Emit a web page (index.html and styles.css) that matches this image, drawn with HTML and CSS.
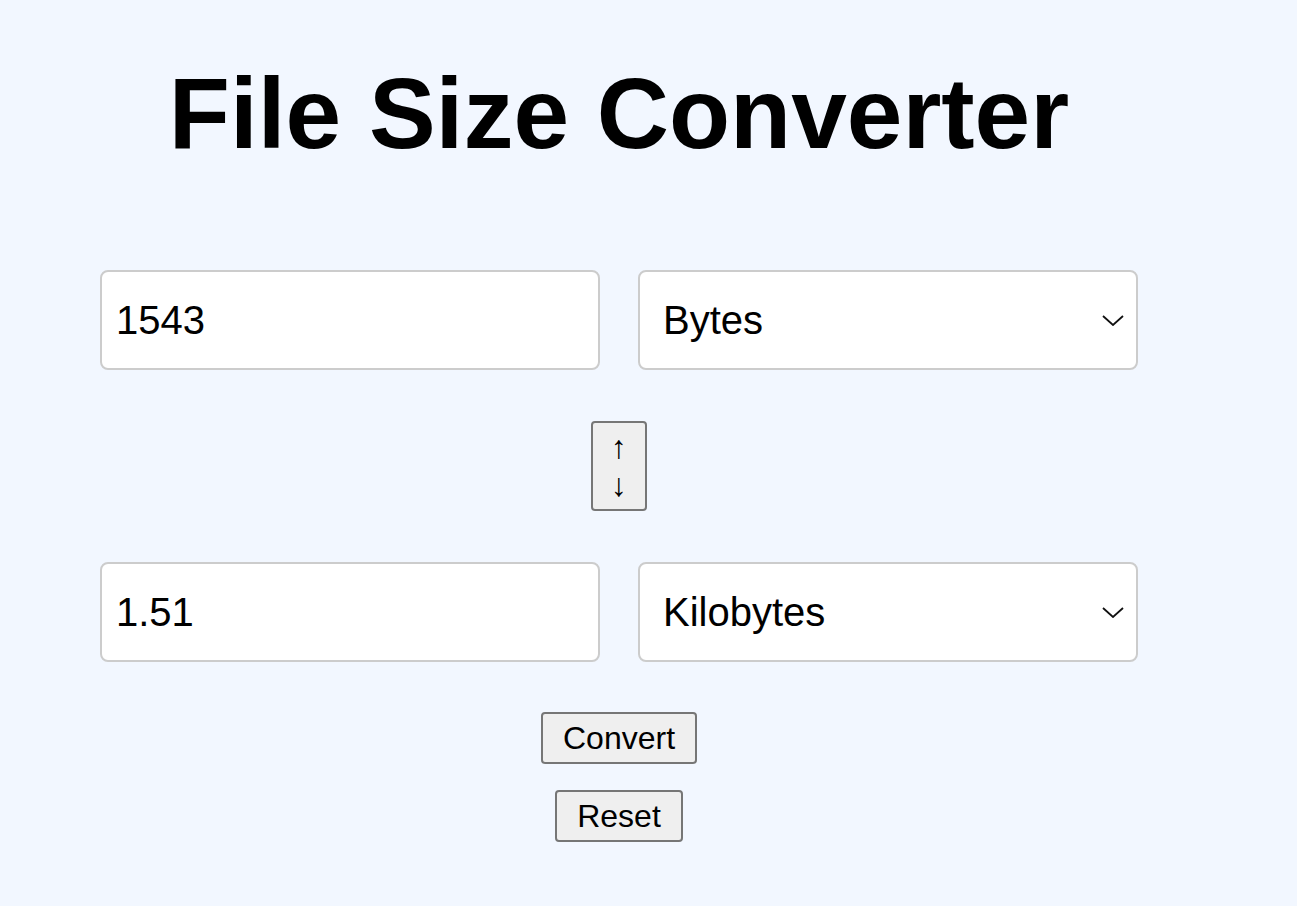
FILE: index.html
```html
<!DOCTYPE html>
<html lang="en">
<head>
<meta charset="utf-8">
<title>File Size Converter</title>
<link rel="stylesheet" href="styles.css">
</head>
<body>
<main class="app">
  <h1 class="title">File Size Converter</h1>
  <div class="row row-from">
    <input class="field" type="text" value="1543">
    <select class="unit">
      <option selected>Bytes</option>
      <option>Kilobytes</option>
      <option>Megabytes</option>
      <option>Gigabytes</option>
    </select>
  </div>
  <button class="btn swap" type="button">↑<br>↓</button>
  <div class="row row-to">
    <input class="field" type="text" value="1.51">
    <select class="unit">
      <option>Bytes</option>
      <option selected>Kilobytes</option>
      <option>Megabytes</option>
      <option>Gigabytes</option>
    </select>
  </div>
  <button class="btn convert" type="button">Convert</button>
  <button class="btn reset" type="button">Reset</button>
</main>
</body>
</html>
```
FILE: styles.css
```css
html, body {
  margin: 0;
  padding: 0;
  background: #f2f7ff;
}

body {
  font-family: "Liberation Sans", Arial, sans-serif;
  color: #000;
}

.app {
  width: 1238px;
  display: flex;
  flex-direction: column;
  align-items: center;
}

.title {
  font-size: 100px;
  font-weight: bold;
  line-height: 1.15;
  margin: 56px 0 0 0;
}

.row {
  display: flex;
  gap: 38px;
  justify-content: center;
}

.row-from {
  margin-top: 99px;
}

.field,
.unit {
  box-sizing: border-box;
  width: 500px;
  height: 100px;
  border: 2px solid #cccccc;
  border-radius: 8px;
  background-color: #fff;
  font-family: "Liberation Sans", Arial, sans-serif;
  font-size: 40px;
  color: #000;
  margin: 0;
}

.field {
  padding: 0 14px;
}

.unit {
  -webkit-appearance: none;
  appearance: none;
  padding: 0 50px 0 23px;
  background-image: url("data:image/svg+xml,%3Csvg xmlns='http://www.w3.org/2000/svg' width='22' height='11' viewBox='0 0 22 11'%3E%3Cpath d='M1 1 L11 10 L21 1' fill='none' stroke='%23111' stroke-width='1.8'/%3E%3C/svg%3E");
  background-repeat: no-repeat;
  background-position: right 12px center;
  background-size: 22px 11px;
}

.btn {
  font-family: "Liberation Sans", Arial, sans-serif;
  font-size: 32px;
  line-height: 38px;
  padding: 5px 20px;
  border: 2px solid #767676;
  border-radius: 4px;
  background: #efefef;
  color: #000;
  margin: 0;
}

.swap {
  margin-top: 51px;
  padding: 5px 18px;
}

.row-to {
  margin-top: 51px;
}

.convert {
  margin-top: 50px;
}

.reset {
  margin-top: 26px;
}
```
